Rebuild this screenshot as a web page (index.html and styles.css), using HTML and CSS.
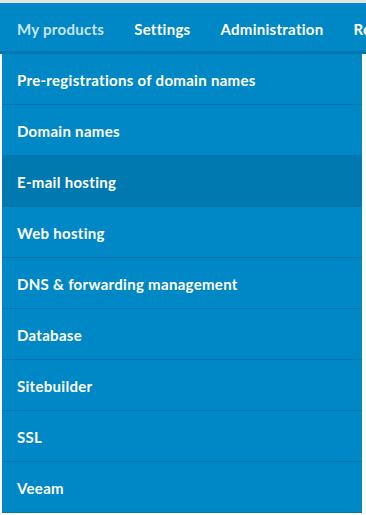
FILE: index.html
```html
<!DOCTYPE html>
<html>
<head>
<meta charset="utf-8">
<link rel="stylesheet" href="styles.css">
</head>
<body>
<div class="topstrip"></div>
<nav class="header">
  <a class="tab active">My products</a>
  <a class="tab">Settings</a>
  <a class="tab">Administration</a>
  <a class="tab">Reports</a>
</nav>
<ul class="menu">
  <li class="item">Pre-registrations of domain names</li>
  <li class="item">Domain names</li>
  <li class="item hover">E-mail hosting</li>
  <li class="item">Web hosting</li>
  <li class="item">DNS &amp; forwarding management</li>
  <li class="item">Database</li>
  <li class="item">Sitebuilder</li>
  <li class="item">SSL</li>
  <li class="item">Veeam</li>
</ul>
</body>
</html>
```
FILE: styles.css
```css
html, body {
  margin: 0;
  padding: 0;
  background: #ffffff;
  overflow: hidden;
  font-family: "Lato", "Open Sans", sans-serif;
}
.topstrip {
  height: 3px;
  background: #e3e3e3;
}
.header {
  display: flex;
  height: 48px;
  background: #0087c5;
  border-bottom: 3px solid #0077b0;
  padding-left: 2px;
  white-space: nowrap;
  overflow: hidden;
}
.tab {
  display: flex;
  align-items: center;
  padding: 3px 15px 0;
  color: #ffffff;
  font-weight: 700;
  font-size: 15px;
  letter-spacing: 0.28px;
  margin-bottom: -3px;
  border-bottom: 3px solid transparent;
}
.tab.active {
  color: #cbe5f3;
  border-bottom-color: #a6d62a;
}
.menu {
  list-style: none;
  margin: 0 0 0 2px;
  padding: 0;
  width: 360px;
  background: #0087c5;
}
.item {
  height: 50px;
  display: flex;
  align-items: center;
  padding: 1px 0 0 15px;
  box-sizing: border-box;
  color: #ffffff;
  font-weight: 700;
  font-size: 15px;
  letter-spacing: 0.3px;
  border-bottom: 1px solid #0076ad;
  height: 51px;
}
.item.hover {
  background: #0079b1;
}
```
